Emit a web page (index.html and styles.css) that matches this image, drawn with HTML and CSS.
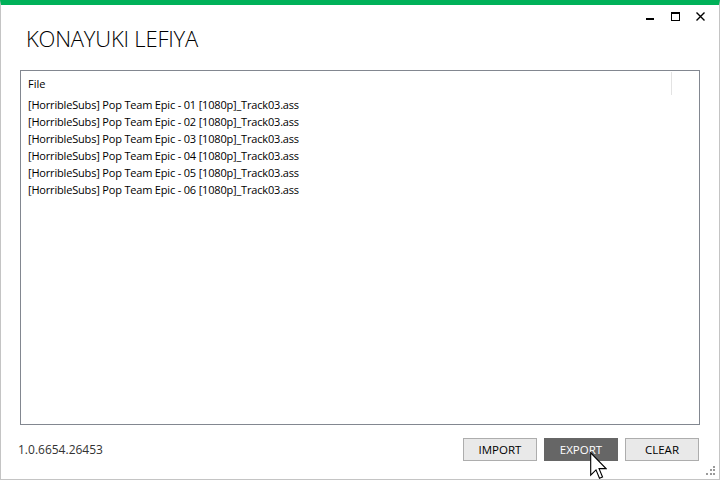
FILE: index.html
```html
<!DOCTYPE html>
<html>
<head>
<meta charset="utf-8">
<link rel="stylesheet" href="styles.css">
</head>
<body>
<div class="window">
  <div class="titlebar">
    <h1 class="title">KONAYUKI LEFIYA</h1>
    <div class="controls">
      <span class="ctl min"><svg width="9" height="9" viewBox="0 0 9 9"><rect x="0" y="6" width="8" height="2" fill="#000"/></svg></span>
      <span class="ctl max"><svg width="9" height="9" viewBox="0 0 9 9"><rect x="0.5" y="0.5" width="8" height="8" fill="none" stroke="#000" stroke-width="1"/><rect x="0" y="0" width="9" height="2" fill="#000"/></svg></span>
      <span class="ctl close"><svg width="9" height="9" viewBox="0 0 9 9"><path d="M0.5 0.5 L8.5 8.5 M8.5 0.5 L0.5 8.5" stroke="#000" stroke-width="1.4"/></svg></span>
    </div>
  </div>
  <div class="list">
    <div class="list-head">
      <span class="col">File</span>
      <span class="divider"></span>
    </div>
    <div class="rows">
      <div class="row">[HorribleSubs] Pop Team Epic - 01 [1080p]_Track03.ass</div>
      <div class="row">[HorribleSubs] Pop Team Epic - 02 [1080p]_Track03.ass</div>
      <div class="row">[HorribleSubs] Pop Team Epic - 03 [1080p]_Track03.ass</div>
      <div class="row">[HorribleSubs] Pop Team Epic - 04 [1080p]_Track03.ass</div>
      <div class="row">[HorribleSubs] Pop Team Epic - 05 [1080p]_Track03.ass</div>
      <div class="row">[HorribleSubs] Pop Team Epic - 06 [1080p]_Track03.ass</div>
    </div>
  </div>
  <div class="footer">
    <span class="version">1.0.6654.26453</span>
    <div class="buttons">
      <button class="btn">IMPORT</button>
      <button class="btn active">EXPORT</button>
      <button class="btn">CLEAR</button>
    </div>
  </div>
  <svg class="grip" width="10" height="10" viewBox="0 0 10 10">
    <rect x="7" y="0" width="2" height="2" fill="#9a9a9a"/>
    <rect x="4" y="3" width="2" height="2" fill="#9a9a9a"/>
    <rect x="7" y="3" width="2" height="2" fill="#9a9a9a"/>
    <rect x="0" y="7" width="2" height="2" fill="#9a9a9a"/>
    <rect x="4" y="7" width="2" height="2" fill="#9a9a9a"/>
    <rect x="7" y="7" width="2" height="2" fill="#9a9a9a"/>
  </svg>
  <svg class="cursor" width="17" height="28" viewBox="0 0 12.2 20">
    <path d="M0.5 0.5 L0.5 16.5 L4.3 12.8 L6.8 18.8 L9 17.9 L6.5 11.9 L11.5 11.9 Z" fill="#fff" stroke="#000" stroke-width="0.8" stroke-linejoin="miter"/>
  </svg>
</div>
</body>
</html>
```
FILE: styles.css
```css
* { box-sizing: border-box; }
html, body { margin: 0; padding: 0; background: #fff; }
body { font-family: "Open Sans", "Noto Sans", sans-serif; }
.window {
  position: relative;
  width: 720px;
  height: 480px;
  border-top: 5px solid #00b159;
  border-left: 1px solid #c4c4c4;
  border-right: 1px solid #c4c4c4;
  border-bottom: 1px solid #c4c4c4;
  display: flex;
  flex-direction: column;
  overflow: hidden;
}
.titlebar {
  display: flex;
  justify-content: space-between;
  align-items: flex-start;
  height: 65px;
}
.title {
  margin: 17px 0 0 25px;
  font-weight: 300;
  font-size: 22px;
  line-height: 32px;
  color: #000;
  letter-spacing: -0.2px;
}
.controls {
  display: flex;
  gap: 16px;
  margin: 7px 14px 0 0;
}
.ctl { display: block; width: 9px; height: 9px; }
.ctl svg { display: block; }
.list {
  margin: 0 19px 0 19px;
  height: 355px;
  border: 1px solid #828790;
  display: flex;
  flex-direction: column;
}
.list-head {
  height: 26px;
  display: flex;
  align-items: flex-start;
  justify-content: space-between;
  padding: 0 27px 0 7px;
}
.col {
  font-size: 11px;
  line-height: 24px;
  padding-top: 1px;
  color: #000;
}
.divider {
  width: 1px;
  height: 23px;
  margin-top: 1px;
  background: #e3e3e3;
}
.rows { padding: 0 0 0 7px; margin-top: -1px; }
.row {
  font-size: 11px;
  line-height: 17px;
  color: #000;
  white-space: nowrap;
  letter-spacing: -0.18px;
}
.footer {
  flex: 1;
  display: flex;
  justify-content: space-between;
  align-items: flex-start;
  padding: 13px 20px 0 17px;
}
.version {
  font-size: 12px;
  line-height: 24px;
  color: #333;
}
.buttons {
  display: flex;
  gap: 7px;
}
.btn {
  width: 74px;
  height: 23px;
  border: 1px solid #adadad;
  background: #e9e9e9;
  font-family: "Open Sans", "Noto Sans", sans-serif;
  font-size: 11.5px;
  color: #000;
  padding: 0;
  line-height: 21px;
}
.btn.active {
  background: #666666;
  border-color: #666666;
  color: #fff;
}
.grip {
  position: absolute;
  right: 3px;
  bottom: 3px;
}
.cursor {
  position: absolute;
  left: 589px;
  top: 447px;
}
```
